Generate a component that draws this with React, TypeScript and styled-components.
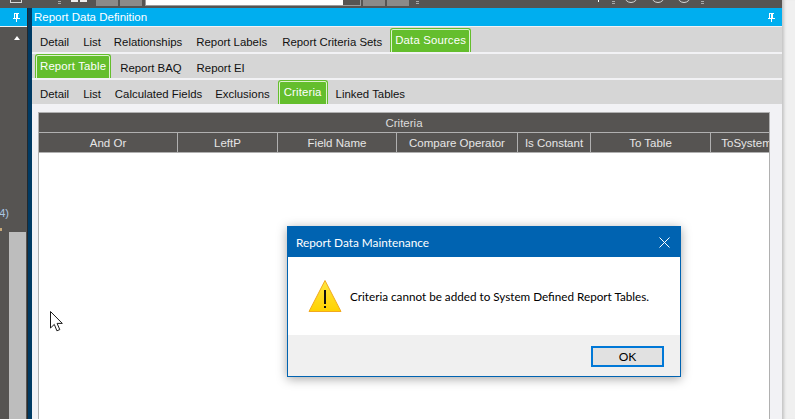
import React from "react";
import styled, { createGlobalStyle } from "styled-components";

const GlobalStyle = createGlobalStyle`
  html, body {
    margin: 0;
    padding: 0;
    background: #f0f0f0;
  }
`;

const columns = ["And Or", "LeftP", "Field Name", "Compare Operator", "Is Constant", "To Table", "ToSystem"];

function Pin() {
  return (
    <svg width="7" height="9" viewBox="0 0 7 9">
      <path d="M1 0h5v1H5v4h2v1H4v3H3V6H0V5h1V1H1zM2 1v4h1V1z" fill="#fff" fillRule="evenodd" />
    </svg>
  );
}

function Warning() {
  return (
    <svg width="34" height="34" viewBox="0 0 34 34">
      <defs>
        <linearGradient id="warn" x1="0" y1="0" x2="0" y2="1">
          <stop offset="0" stopColor="#ffe640" />
          <stop offset="1" stopColor="#ffd200" />
        </linearGradient>
      </defs>
      <path d="M17 1.5 33 32.5H1Z" fill="url(#warn)" stroke="#f2a91e" strokeWidth="1" strokeLinejoin="round" />
      <rect x="16" y="11" width="2" height="14" fill="#111" />
      <rect x="16" y="27" width="2" height="2" fill="#111" />
    </svg>
  );
}

export default function App() {
  return (
    <>
      <GlobalStyle />
      <Screen>
        <Left>
          <Toolbar>
            <ToolIcon $width={12} $left={10} />
            <Grip $left={36} />
            <ToolBars $left={10} />
            <ToolButton $left={9} />
            <ToolButton $left={2} />
            <ToolInput>
              <InputEnd />
            </ToolInput>
            <ToolButton $left={2} />
            <ToolButton $left={2} />
            <Grip $left={7} />
            <ToolTick $left={179} />
            <Grip $left={13} />
            <ToolRing $left={9} />
            <ToolRing $left={13} />
            <ToolRing $left={12} />
            <Grip $left={10} />
          </Toolbar>
          <Workspace>
            <Sidebar>
              <SideHeader>
                <Pin />
              </SideHeader>
              <SideArrow />
              <SideNote>(4)</SideNote>
              <SideMark />
              <SideScroll />
            </Sidebar>
            <Divider />
            <Main>
              <TitleBar>
                <span>Report Data Definition</span>
                <Pin />
              </TitleBar>
              <TabRow $height={25}>
                <Tab $gap={14}>Detail</Tab>
                <Tab $gap={13}>List</Tab>
                <Tab $gap={14}>Relationships</Tab>
                <Tab $gap={15}>Report Labels</Tab>
                <Tab $gap={8}>Report Criteria Sets</Tab>
                <ActiveTab>Data Sources</ActiveTab>
              </TabRow>
              <TabRow $height={24} $left={3}>
                <ActiveTab $gap={9}>Report Table</ActiveTab>
                <Tab $gap={15}>Report BAQ</Tab>
                <Tab>Report EI</Tab>
              </TabRow>
              <TabRow $height={24}>
                <Tab $gap={14}>Detail</Tab>
                <Tab $gap={14}>List</Tab>
                <Tab $gap={13}>Calculated Fields</Tab>
                <Tab $gap={8}>Exclusions</Tab>
                <ActiveTab $gap={8} $pad={5}>
                  Criteria
                </ActiveTab>
                <Tab>Linked Tables</Tab>
              </TabRow>
              <Panel>
                <Grid>
                  <GridTitle>Criteria</GridTitle>
                  <GridHeader>
                    {columns.map((c) => (
                      <HeaderCell key={c}>{c}</HeaderCell>
                    ))}
                  </GridHeader>
                </Grid>
              </Panel>
            </Main>
          </Workspace>
        </Left>
        <Gutter />

        <Cursor width="14" height="21" viewBox="0 0 14 21">
          <path
            d="M.5.5V17l3.8-3.6 2.6 6.4 2.9-1.2-2.7-6.2h5.2Z"
            fill="#fff"
            stroke="#1a1a1a"
            strokeWidth="1"
            strokeLinejoin="miter"
          />
        </Cursor>

        <Dialog>
          <DialogTitle>
            <span>Report Data Maintenance</span>
            <svg width="11" height="11" viewBox="0 0 11 11">
              <path d="M.5.5l10 10M10.5.5l-10 10" stroke="#fff" strokeWidth="1" fill="none" />
            </svg>
          </DialogTitle>
          <DialogBody>
            <Warning />
            <Message>Criteria cannot be added to System Defined Report Tables.</Message>
          </DialogBody>
          <DialogFooter>
            <OkButton>OK</OkButton>
          </DialogFooter>
        </Dialog>
      </Screen>
    </>
  );
}

const Screen = styled.div`
  position: relative;
  display: flex;
  width: 795px;
  height: 419px;
  overflow: hidden;
  font-family: "Liberation Sans", Arial, sans-serif;
`;

const Left = styled.div`
  display: flex;
  flex-direction: column;
  width: 782px;
  flex: none;
`;

const Gutter = styled.div`
  flex: 1;
  background: #f0f0f0;
  box-shadow: inset 4px 0 3px -2px #c4c4c4;
`;

const Toolbar = styled.div`
  display: flex;
  align-items: flex-start;
  height: 8px;
  flex: none;
  background: #565452;
  overflow: hidden;
`;

const ToolIcon = styled.div<{ $width: number; $left: number }>`
  width: ${(p) => p.$width}px;
  height: 3px;
  margin-left: ${(p) => p.$left}px;
  border: 1px solid #d8d8d8;
  border-top: 0;
  box-sizing: border-box;
`;

const Grip = styled.div<{ $left: number }>`
  width: 3px;
  height: 4px;
  margin-left: ${(p) => p.$left}px;
  margin-top: 1px;
  background: repeating-linear-gradient(to bottom, #a8a8a8 0 1px, transparent 1px 2px);
`;

const ToolBars = styled.div<{ $left: number }>`
  width: 16px;
  height: 2px;
  margin-left: ${(p) => p.$left}px;
  background: linear-gradient(to right, #eee 0 7px, transparent 7px 9px, #eee 9px);
`;

const ToolButton = styled.div<{ $left: number }>`
  width: 22px;
  height: 6px;
  margin-left: ${(p) => p.$left}px;
  background: #8c8a88;
`;

const ToolInput = styled.div`
  display: flex;
  justify-content: flex-end;
  width: 216px;
  height: 6px;
  margin-left: 3px;
  background: #fff;
  border: 1px solid #9a9a9a;
  border-top: 0;
  box-sizing: border-box;
`;

const InputEnd = styled.div`
  width: 17px;
  background: #565452;
`;

const ToolTick = styled.div<{ $left: number }>`
  width: 1px;
  height: 2px;
  margin-left: ${(p) => p.$left}px;
  background: #fff;
`;

const ToolRing = styled.div<{ $left: number }>`
  width: 14px;
  height: 14px;
  margin-left: ${(p) => p.$left}px;
  margin-top: -11px;
  border: 1.5px solid #d8d8d8;
  border-radius: 50%;
  box-sizing: border-box;
  flex: none;
`;

const Workspace = styled.div`
  display: flex;
  flex: 1;
  min-height: 0;
`;

const Sidebar = styled.div`
  display: flex;
  flex-direction: column;
  width: 27px;
  flex: none;
  background: #565452;
`;

const SideHeader = styled.div`
  display: flex;
  align-items: center;
  height: 18px;
  padding-left: 13px;
  background: #00aeef;
  border-bottom: 1px solid #f2f2f2;
`;

const SideArrow = styled.div`
  width: 0;
  height: 0;
  margin: 9px 0 0 14px;
  border-left: 3.5px solid transparent;
  border-right: 3.5px solid transparent;
  border-bottom: 4px solid #fff;
`;

const SideNote = styled.div`
  display: flex;
  justify-content: flex-end;
  width: 9px;
  margin-top: 167px;
  overflow: hidden;
  font-size: 11px;
  line-height: 13px;
  color: #a9c6e4;
`;

const SideMark = styled.div`
  width: 2px;
  height: 3px;
  margin-top: 8px;
  background: #c9a877;
`;

const SideScroll = styled.div`
  flex: 1;
  width: 17px;
  margin: 1px 0 0 9px;
  background: #bdbdbd;
`;

const Divider = styled.div`
  width: 5px;
  flex: none;
  background: #003a63;
  border-left: 1px solid #23282c;
  box-sizing: border-box;
`;

const Main = styled.div`
  display: flex;
  flex-direction: column;
  flex: 1;
  min-width: 0;
  background: #f2f2f5;
`;

const TitleBar = styled.div`
  display: flex;
  align-items: center;
  justify-content: space-between;
  height: 18px;
  padding: 0 7px 0 2px;
  flex: none;
  background: #00aeef;
  color: #fff;
  font-size: 11.5px;
`;

const TabRow = styled.div<{ $height: number; $left?: number }>`
  display: flex;
  align-items: flex-end;
  height: ${(p) => p.$height}px;
  padding-left: ${(p) => p.$left ?? 8}px;
  margin-top: 1px;
  flex: none;
  background: #d6d6d6;

  & + & {
    margin-top: 2px;
  }
`;

const Tab = styled.div<{ $gap?: number }>`
  margin-right: ${(p) => p.$gap ?? 0}px;
  padding-bottom: 3px;
  font-size: 11.4px;
  line-height: 14px;
  color: #111;
  white-space: nowrap;
`;

const ActiveTab = styled.div<{ $gap?: number; $pad?: number }>`
  display: flex;
  align-items: flex-start;
  height: 24px;
  margin-right: ${(p) => p.$gap ?? 0}px;
  padding: 4px ${(p) => p.$pad ?? 4}px 0;
  background: #64be2d;
  border: 1px solid #64be2d;
  border-bottom: 0;
  border-radius: 3px 3px 0 0;
  box-shadow: inset 0 1px 0 #dff2d0, inset 1px 0 0 #dff2d0, inset -1px 0 0 #dff2d0;
  box-sizing: border-box;
  font-size: 11.4px;
  letter-spacing: 0.15px;
  line-height: 14px;
  color: #fff;
  white-space: nowrap;
`;

const Panel = styled.div`
  display: flex;
  flex: 1;
  min-height: 0;
  padding: 8px 12px 0 6px;
`;

const Grid = styled.div`
  display: flex;
  flex-direction: column;
  flex: 1;
  min-width: 0;
  background: #fff;
  border: 1px solid #b0b0b0;
  border-bottom: 0;
`;

const GridTitle = styled.div`
  height: 19px;
  background: #565452;
  color: #dcdcdc;
  font-size: 11.5px;
  line-height: 20px;
  text-align: center;
  border-bottom: 1px solid #b0b0b0;
`;

const GridHeader = styled.div`
  display: grid;
  grid-template-columns: 139px 100px 119px 121px 73px 120px 72px;
  height: 19px;
  background: #565452;
  border-bottom: 1px solid #b0b0b0;
  overflow: hidden;
`;

const HeaderCell = styled.div`
  border-right: 1px solid #b0b0b0;
  color: #e6e6e6;
  font-size: 11.5px;
  line-height: 20px;
  text-align: center;
  white-space: nowrap;
  overflow: hidden;
`;

const Cursor = styled.svg`
  position: absolute;
  left: 50px;
  top: 311px;
`;

const Dialog = styled.div`
  position: absolute;
  left: 287px;
  top: 226px;
  display: flex;
  flex-direction: column;
  width: 394px;
  height: 151px;
  box-sizing: border-box;
  border: 1px solid #0063b1;
  background: #fff;
  box-shadow: 0 2px 10px rgba(0, 0, 0, 0.35);
  font-family: Lato, "Noto Sans", sans-serif;
`;

const DialogTitle = styled.div`
  display: flex;
  align-items: center;
  justify-content: space-between;
  height: 30px;
  padding: 0 10px 0 8px;
  flex: none;
  background: #0063b1;
  color: #fff;
  font-size: 11.8px;
`;

const DialogBody = styled.div`
  display: flex;
  align-items: center;
  gap: 8px;
  flex: 1;
  padding-left: 20px;
`;

const Message = styled.div`
  font-size: 11.7px;
  color: #000;
  white-space: nowrap;
`;

const DialogFooter = styled.div`
  display: flex;
  align-items: flex-start;
  justify-content: flex-end;
  height: 41px;
  padding: 11px 16px 0 0;
  flex: none;
  box-sizing: border-box;
  background: #f0f0f0;
`;

const OkButton = styled.button`
  width: 73px;
  height: 21px;
  padding: 0;
  border: 2px solid #0078d7;
  background: #e1e1e1;
  color: #000;
  font-family: inherit;
  font-size: 12px;
  line-height: 16px;
`;
